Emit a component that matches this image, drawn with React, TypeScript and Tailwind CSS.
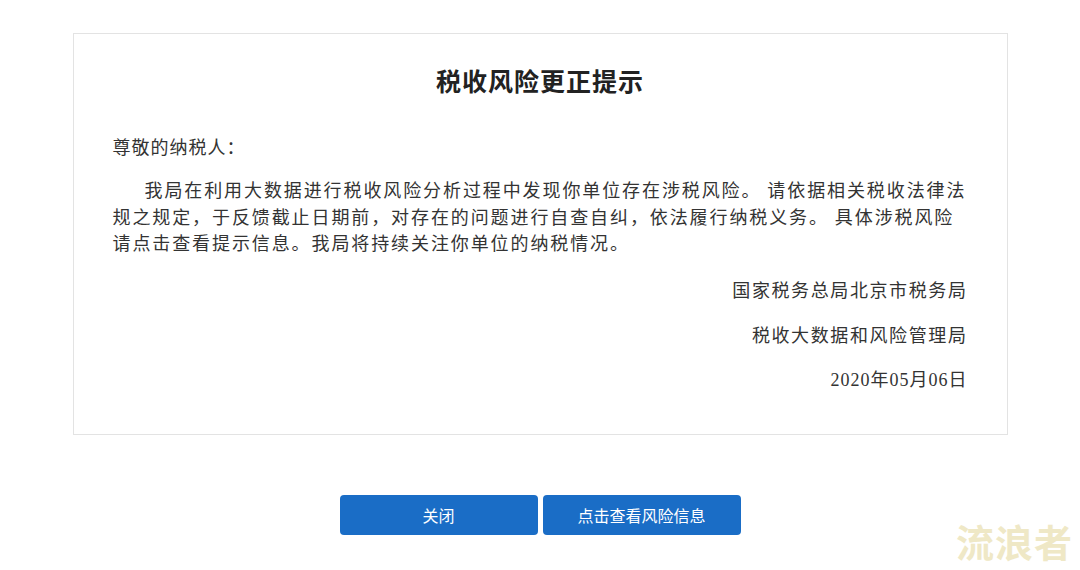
const body = '"Noto Sans CJK SC", "Liberation Sans", sans-serif';

export default function App() {
  return (
    <div className="relative w-[1080px] h-[570px] bg-white overflow-hidden" style={{ fontFamily: body }}>
      <div className="pt-[33px] flex flex-col items-center">
        <div className="w-[935px] border border-[#e3e3e3] bg-white px-[39px] pt-[34px] pb-[40px] text-[#333]">
          <h1
            className="text-center text-[25px] leading-[30px] font-bold tracking-[1px] text-[#222]"
            style={{ fontFamily: '"Liberation Serif", "Noto Sans CJK SC", serif' }}
          >
            税收风险更正提示
          </h1>
          <p className="mt-[35px] text-[18px] leading-[27px] tracking-[1px]">尊敬的纳税人：</p>
          <p className="mt-[16px] text-[18px] leading-[26.5px] tracking-[1.9px] indent-[32px] whitespace-nowrap">
            我局在利用大数据进行税收风险分析过程中发现你单位存在涉税风险。 请依据相关税收法律法
            <br />
            规之规定，于反馈截止日期前，对存在的问题进行自查自纠，依法履行纳税义务。 具体涉税风险
            <br />
            请点击查看提示信息。我局将持续关注你单位的纳税情况。
          </p>
          <div className="mt-[20px] flex flex-col items-end gap-[18.5px] text-[18px] leading-[27px] tracking-[1.6px]">
            <p>国家税务总局北京市税务局</p>
            <p>税收大数据和风险管理局</p>
            <p className="tracking-[1px]" style={{ fontFamily: '"Liberation Serif", "Noto Sans CJK SC", serif' }}>
              2020年05月06日
            </p>
          </div>
        </div>
        <div className="mt-[60px] flex gap-[5px]">
          <button className="w-[198px] h-[40px] rounded-[4px] bg-[#1a6dc6] text-white text-[16px]">关闭</button>
          <button className="w-[198px] h-[40px] rounded-[4px] bg-[#1a6dc6] text-white text-[16px]">点击查看风险信息</button>
        </div>
      </div>
      <div className="absolute right-[7px] bottom-[9px] text-[38px] leading-[40px] font-bold text-[#efe8c6] tracking-[1px]">
        流浪者
      </div>
    </div>
  );
}
